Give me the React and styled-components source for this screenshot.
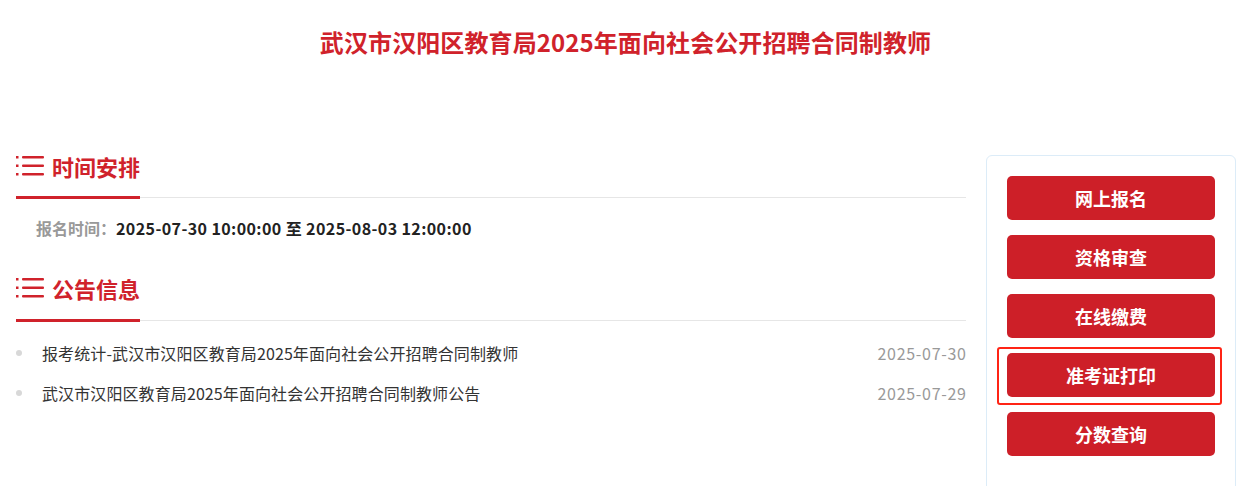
import React from 'react'
import styled, { createGlobalStyle } from 'styled-components'

const GlobalStyle = createGlobalStyle`
  html, body {
    margin: 0;
    padding: 0;
    background: #ffffff;
    font-family: "Noto Sans CJK SC", "Noto Sans", sans-serif;
  }
`

const Page = styled.div`
  width: 1243px;
  height: 486px;
  overflow: hidden;
  background: #ffffff;
`

const Title = styled.h1`
  margin: 0;
  padding: 22px 0 0 8px;
  height: 40px;
  line-height: 40px;
  text-align: center;
  font-size: 24px;
  font-weight: 700;
  color: #d0222b;
  letter-spacing: 0.1px;
`

const Main = styled.div`
  display: flex;
  align-items: flex-start;
  gap: 20px;
  padding: 89px 0 0 16px;
`

const LeftCol = styled.div`
  width: 950px;
`

const SectionHead = styled.div`
  display: flex;
  border-bottom: 1px solid #e6e6e6;
  margin-top: ${props => props.top || 0}px;
`

const HeadTitle = styled.div`
  display: flex;
  align-items: center;
  gap: 8px;
  height: 30px;
  padding-bottom: ${props => props.pad || 15}px;
  width: 124px;
  border-bottom: 3px solid #d0222b;
  margin-bottom: -2px;
  font-size: 22px;
  font-weight: 700;
  line-height: 30px;
  color: #d0222b;
`

const InfoRow = styled.div`
  margin-top: 18px;
  padding-left: 20px;
  font-size: 16px;
  line-height: 24px;
  color: #333333;
`

const InfoLabel = styled.span`
  color: #999999;
  font-weight: 700;
`

const InfoValue = styled.span`
  font-weight: 700;
  color: #222222;
  letter-spacing: 0.4px;
`

const NewsList = styled.ul`
  list-style: none;
  margin: 12px 0 0;
  padding: 0;
`

const NewsItem = styled.li`
  display: flex;
  align-items: center;
  height: 40px;
  font-size: 16px;
  color: #333333;
`

const Dot = styled.span`
  width: 6px;
  height: 6px;
  border-radius: 50%;
  background: #d8d8d8;
  margin-right: 20px;
  flex-shrink: 0;
`

const NewsTitle = styled.span`
  flex: 1;
  letter-spacing: 0.1px;
`

const NewsDate = styled.span`
  color: #999999;
  letter-spacing: 0.7px;
  margin-right: -0.7px;
`

const Sidebar = styled.div`
  margin-top: 4px;
  width: 208px;
  height: 400px;
  padding: 20px;
  border: 1px solid #dcecf8;
  border-radius: 6px;
  display: flex;
  flex-direction: column;
  gap: 15px;
`

const ActionButton = styled.div`
  position: relative;
  height: 44px;
  border-radius: 5px;
  background: #cd1f28;
  color: #ffffff;
  font-size: 18px;
  font-weight: 700;
  line-height: 44px;
  text-align: center;
  cursor: pointer;

  ${props =>
    props.marked &&
    `
    &::after {
      content: '';
      position: absolute;
      top: -6px;
      left: -10px;
      right: -7px;
      bottom: -8px;
      border: 2px solid #ff2415;
      border-radius: 3px;
      pointer-events: none;
    }
  `}
`

const ListIcon = () => (
  <svg width="28" height="22" viewBox="0 0 28 22">
    <g fill="#d0222b">
      <rect x="0" y="1" width="2.5" height="2.5" />
      <rect x="0" y="9.5" width="2.5" height="2.5" />
      <rect x="0" y="18" width="2.5" height="2.5" />
      <rect x="6" y="1" width="22" height="2.5" rx="1" />
      <rect x="6" y="9.5" width="22" height="2.5" rx="1" />
      <rect x="6" y="18" width="22" height="2.5" rx="1" />
    </g>
  </svg>
)

const news = [
  { title: '报考统计-武汉市汉阳区教育局2025年面向社会公开招聘合同制教师', date: '2025-07-30' },
  { title: '武汉市汉阳区教育局2025年面向社会公开招聘合同制教师公告', date: '2025-07-29' },
]

const actions = ['网上报名', '资格审查', '在线缴费', '准考证打印', '分数查询']

export default function App() {
  return (
    <Page>
      <GlobalStyle />
      <Title>武汉市汉阳区教育局2025年面向社会公开招聘合同制教师</Title>
      <Main>
        <LeftCol>
          <SectionHead>
            <HeadTitle>
              <ListIcon />
              时间安排
            </HeadTitle>
          </SectionHead>
          <InfoRow>
            <InfoLabel>报名时间：</InfoLabel>
            <InfoValue>2025-07-30 10:00:00 至 2025-08-03 12:00:00</InfoValue>
          </InfoRow>
          <SectionHead top={33}>
            <HeadTitle pad={16}>
              <ListIcon />
              公告信息
            </HeadTitle>
          </SectionHead>
          <NewsList>
            {news.map(item => (
              <NewsItem key={item.title}>
                <Dot />
                <NewsTitle>{item.title}</NewsTitle>
                <NewsDate>{item.date}</NewsDate>
              </NewsItem>
            ))}
          </NewsList>
        </LeftCol>
        <Sidebar>
          {actions.map(label => (
            <ActionButton key={label} marked={label === '准考证打印'}>
              {label}
            </ActionButton>
          ))}
        </Sidebar>
      </Main>
    </Page>
  )
}
